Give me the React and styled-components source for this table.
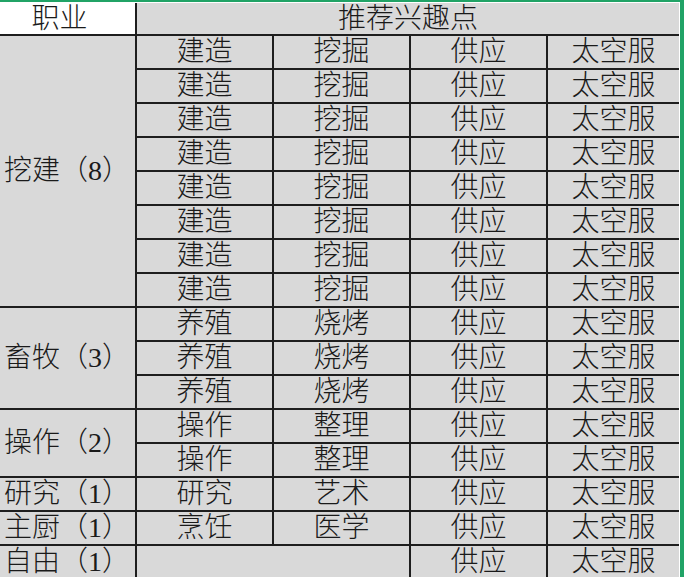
import React from "react";
import styled, { createGlobalStyle } from "styled-components";

const GlobalStyle = createGlobalStyle`
  html, body {
    margin: 0;
    padding: 0;
    height: 577px;
    overflow: hidden;
    background: #ffffff;
  }
`;

const groups = [
  { job: "挖建（8）", rows: Array(8).fill(["建造", "挖掘", "供应", "太空服"]) },
  { job: "畜牧（3）", rows: Array(3).fill(["养殖", "烧烤", "供应", "太空服"]) },
  { job: "操作（2）", rows: Array(2).fill(["操作", "整理", "供应", "太空服"]) },
  { job: "研究（1）", rows: [["研究", "艺术", "供应", "太空服"]] },
  { job: "主厨（1）", rows: [["烹饪", "医学", "供应", "太空服"]] },
  { job: "自由（1）", rows: [[null, "供应", "太空服"]] },
];

const App = () => {
  let rowIndex = 2;
  const cells = [];

  groups.forEach((group, g) => {
    cells.push(
      <Cell
        key={`job-${g}`}
        $align="left"
        style={{ gridRow: `${rowIndex} / span ${group.rows.length}` }}
      >
        {group.job}
      </Cell>
    );
    group.rows.forEach((row, r) => {
      if (row.length === 3) {
        // empty merged cell for the "自由" row
        cells.push(<Cell key={`e-${g}-${r}`} $colSpan={2} />);
        cells.push(<Cell key={`a-${g}-${r}`}>{row[1]}</Cell>);
        cells.push(<Cell key={`b-${g}-${r}`}>{row[2]}</Cell>);
      } else {
        row.forEach((text, c) => {
          cells.push(<Cell key={`c-${g}-${r}-${c}`}>{text}</Cell>);
        });
      }
    });
    rowIndex += group.rows.length;
  });

  return (
    <>
      <GlobalStyle />
      <Sheet>
        <Grid>
          <HeadCell>职业</HeadCell>
          <Cell $colSpan={4}>推荐兴趣点</Cell>
          {cells}
        </Grid>
      </Sheet>
    </>
  );
};

export default App;

const Sheet = styled.div`
  border-top: 2px solid #21a366;
  border-right: 4px solid #21a366;
  padding-top: 1px;
  padding-right: 1px;
  background: #ffffff;
  width: 679px;
`;

const Grid = styled.div`
  display: grid;
  grid-template-columns: 135px 135px 135px 135px 131px;
  grid-template-rows: 31px repeat(16, 32px);
  gap: 2px;
  background: #1e1e1e;
`;

const Cell = styled.div`
  background: #d9d9d9;
  grid-column: ${(p) => (p.$colSpan ? `span ${p.$colSpan}` : "auto")};
  display: flex;
  align-items: center;
  justify-content: ${(p) => (p.$align === "left" ? "flex-start" : "center")};
  padding-left: ${(p) => (p.$align === "left" ? "4px" : "0")};
  font-family: "Liberation Serif", "Noto Sans CJK SC", serif;
  font-size: 28px;
  font-weight: 300;
  line-height: 1;
  color: #1a1a1a;
  white-space: nowrap;
  overflow: hidden;
`;

const HeadCell = styled(Cell)`
  background: #ffffff;
  padding-right: 16px;
`;
